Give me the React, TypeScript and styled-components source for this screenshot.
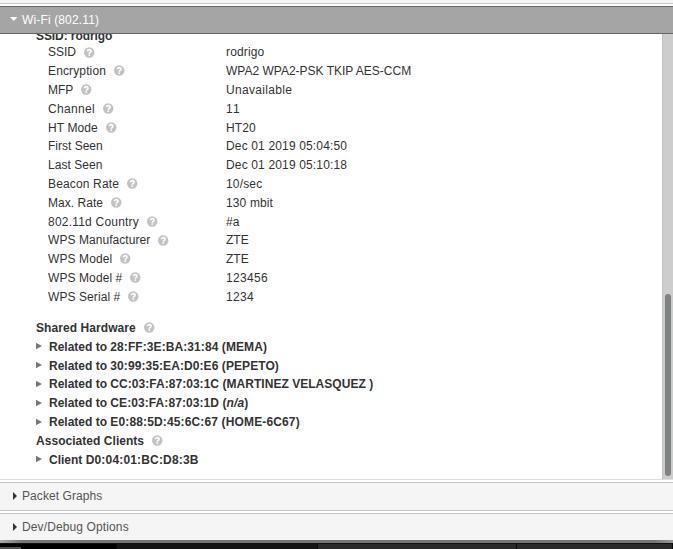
import React from "react";
import styled, { createGlobalStyle } from "styled-components";

const GlobalStyle = createGlobalStyle`
  html, body { margin: 0; background: #fff; }
  body { width: 673px; height: 549px; overflow: hidden; }
`;

const Page = styled.div`
  width: 673px;
  height: 549px;
  display: flex;
  flex-direction: column;
  overflow: hidden;
  font-family: "Liberation Sans", Arial, sans-serif;
  font-size: 12px;
  color: #333;
`;

const PreviousSection = styled.div`
  flex: none;
  height: 3px;
  background: #f5f5f5;
  border-bottom: 1px solid #c5c5c5;
  margin-bottom: 2px;
`;

const SectionHeader = styled.div<{ $active?: boolean; $last?: boolean }>`
  flex: none;
  box-sizing: border-box;
  height: ${(p) => (p.$active ? 28 : p.$last ? 27 : 29)}px;
  display: flex;
  align-items: center;
  padding-left: 10px;
  padding-bottom: ${(p) => (p.$active ? 0 : 1)}px;
  border: solid ${(p) => (p.$active ? "#666" : "#c5c5c5")};
  border-width: ${(p) => (p.$last ? "1px 0 0" : "1px 0")};
  background: ${(p) => (p.$active ? "#a5a5a5" : "#f5f5f5")};
  color: ${(p) => (p.$active ? "#fff" : "#555")};
  margin-bottom: ${(p) => (p.$active || p.$last ? 0 : 2)}px;
`;

const HeaderIcon = styled.svg`
  width: 8px;
  height: 8px;
  margin-right: 4px;
`;

const Text = styled.span<{ $tracking?: number }>`
  letter-spacing: ${(p) => p.$tracking ?? 0}px;
`;

const Value = styled(Text)`
  font-kerning: ${(p) => ((p.$tracking ?? 0) >= 0.3 ? "none" : "auto")};
`;

const Panel = styled.div`
  flex: none;
  height: 445px;
  display: flex;
  border-bottom: 1px solid #ddd;
  margin-bottom: 2px;
`;

const Content = styled.div`
  flex: 1;
  overflow: hidden;
  padding-left: 36px;
`;

const Details = styled.div`
  margin-top: -5.6px;
`;

const Heading = styled.div<{ $first?: boolean }>`
  height: ${(p) => (p.$first ? 15 : 18.8)}px;
  line-height: 18.8px;
  display: flex;
  align-items: center;
  font-weight: bold;
  white-space: pre;
`;

const Properties = styled.div`
  padding: 0 0 12.4px 12px;
`;

const Row = styled.div`
  display: grid;
  grid-template-columns: 178px 1fr;
  height: 18.8px;
  line-height: 18.8px;
`;

const Label = styled.div`
  display: flex;
  align-items: center;
`;

const HelpIcon = styled.svg`
  width: 11px;
  height: 11px;
  margin: 0 0 1.5px 8px;
`;

const Arrow = styled.svg`
  width: 6px;
  height: 8px;
  margin: 0 7px 1.4px 0;
`;

const Scrollbar = styled.div`
  box-sizing: border-box;
  width: 11px;
  background: #cdcdcd;
  border-left: 1px solid #c0c0c0;
  padding: 260px 0 0 2px;
`;

const Thumb = styled.div`
  width: 6px;
  height: 182px;
  border-radius: 3px;
  background: #7e8283;
`;

const WindowShadow = styled.div`
  flex: none;
  height: 3px;
  background: linear-gradient(90deg, #aaa, #777 22px, #777 655px, #999);
`;

const Taskbar = styled.div`
  flex: 1;
  display: grid;
  grid-template-columns: 117px 201px 199px 1fr;
  background: #000;
`;

const Task = styled.div<{ $tone: string }>`
  box-sizing: border-box;
  background: ${(p) => p.$tone};
  border-top: 1px solid #111;
  border-right: 1px solid #080808;
`;

const TaskHandle = styled.div`
  width: 21px;
  height: 2px;
  margin-top: 3px;
  background: #555;
`;

const Help = () => (
  <HelpIcon viewBox="0 0 11 11">
    <circle cx="5.2" cy="5.5" r="5.2" fill="#c2c2c2" />
    <path d="M3.4 4.3C3.5 2.1 7 2.1 7 4.2C7 5.4 5.3 5.3 5.3 6.7" fill="none" stroke="#fff" strokeWidth="1.7" />
    <rect x="4.4" y="7.4" width="1.7" height="1.5" fill="#fff" />
  </HelpIcon>
);

interface Property {
  label: string;
  value: string;
  help?: boolean;
  labelTracking?: number;
  valueTracking?: number;
}

const properties: Property[] = [
  { label: "SSID", value: "rodrigo", help: true, valueTracking: 0.14 },
  { label: "Encryption", value: "WPA2 WPA2-PSK TKIP AES-CCM", help: true, labelTracking: 0.13 },
  { label: "MFP", value: "Unavailable", help: true, labelTracking: -0.1, valueTracking: 0.33 },
  { label: "Channel", value: "11", help: true, labelTracking: 0.33, valueTracking: 0.33 },
  { label: "HT Mode", value: "HT20", help: true, labelTracking: 0.1, valueTracking: 0.15 },
  { label: "First Seen", value: "Dec 01 2019 05:04:50", valueTracking: 0.15 },
  { label: "Last Seen", value: "Dec 01 2019 05:10:18", labelTracking: 0.05, valueTracking: 0.15 },
  { label: "Beacon Rate", value: "10/sec", help: true, labelTracking: 0.15, valueTracking: 0.17 },
  { label: "Max. Rate", value: "130 mbit", help: true, labelTracking: 0.04, valueTracking: 0.13 },
  { label: "802.11d Country", value: "#a", help: true, labelTracking: 0.21, valueTracking: 0.15 },
  { label: "WPS Manufacturer", value: "ZTE", help: true, labelTracking: 0.06 },
  { label: "WPS Model", value: "ZTE", help: true, labelTracking: 0.1 },
  { label: "WPS Model #", value: "123456", help: true, labelTracking: 0.09, valueTracking: 0.33 },
  { label: "WPS Serial #", value: "1234", help: true, labelTracking: 0.08, valueTracking: 0.33 },
];

interface ExpanderProps {
  prefix: string;
  tracking: number;
  children: React.ReactNode;
}

const Expander = ({ prefix, tracking, children }: ExpanderProps) => (
  <Heading>
    <Arrow viewBox="0 0 6 8">
      <path d="M0 0.7L6 4L0 7.3Z" fill="#777" />
    </Arrow>
    <span>
      {prefix} <Text $tracking={tracking}>{children}</Text>
    </span>
  </Heading>
);

const Collapsed = ({ title, tracking, last }: { title: string; tracking: number; last?: boolean }) => (
  <SectionHeader $last={last}>
    <HeaderIcon viewBox="0 0 8 8">
      <path d="M3 0L7 4L3 8Z" fill="#333" />
    </HeaderIcon>
    <Text $tracking={tracking}>{title}</Text>
  </SectionHeader>
);

export default function App() {
  return (
    <>
      <GlobalStyle />
      <Page>
        <PreviousSection />
        <SectionHeader $active>
          <HeaderIcon viewBox="0 0 8 8">
            <path d="M0 1H7.4L3.7 5Z" fill="#fff" />
          </HeaderIcon>
          <Text $tracking={0.14}>Wi-Fi (802.11)</Text>
        </SectionHeader>
        <Panel>
          <Content>
            <Details>
              <Heading $first><Text $tracking={-0.08}>SSID: rodrigo</Text></Heading>
              <Properties>
                {properties.map((p) => (
                  <Row key={p.label}>
                    <Label>
                      <Text $tracking={p.labelTracking}>{p.label}</Text>
                      {p.help && <Help />}
                    </Label>
                    <Value $tracking={p.valueTracking}>{p.value}</Value>
                  </Row>
                ))}
              </Properties>
              <Heading><Text $tracking={0.07}>Shared Hardware</Text><Help /></Heading>
              <Expander prefix="Related to" tracking={0.08}>28:FF:3E:BA:31:84 (MEMA)</Expander>
              <Expander prefix="Related to" tracking={0.08}>30:99:35:EA:D0:E6 (PEPETO)</Expander>
              <Expander prefix="Related to" tracking={0.04}>CC:03:FA:87:03:1C (MARTINEZ VELASQUEZ )</Expander>
              <Expander prefix="Related to" tracking={0.08}>CE:03:FA:87:03:1D (<i>n/a</i>)</Expander>
              <Expander prefix="Related to" tracking={0.14}>E0:88:5D:45:6C:67 (HOME-6C67)</Expander>
              <Heading><Text $tracking={0.04}>Associated Clients</Text><Help /></Heading>
              <Expander prefix="Client" tracking={0.17}>D0:04:01:BC:D8:3B</Expander>
            </Details>
          </Content>
          <Scrollbar>
            <Thumb />
          </Scrollbar>
        </Panel>
        <Collapsed title="Packet Graphs" tracking={0.08} />
        <Collapsed title="Dev/Debug Options" tracking={0.12} last />
        <WindowShadow />
        <Taskbar>
          <Task $tone="#000"><TaskHandle /></Task>
          <Task $tone="#141414" />
          <Task $tone="#292929" />
          <Task $tone="#292929" />
        </Taskbar>
      </Page>
    </>
  );
}
